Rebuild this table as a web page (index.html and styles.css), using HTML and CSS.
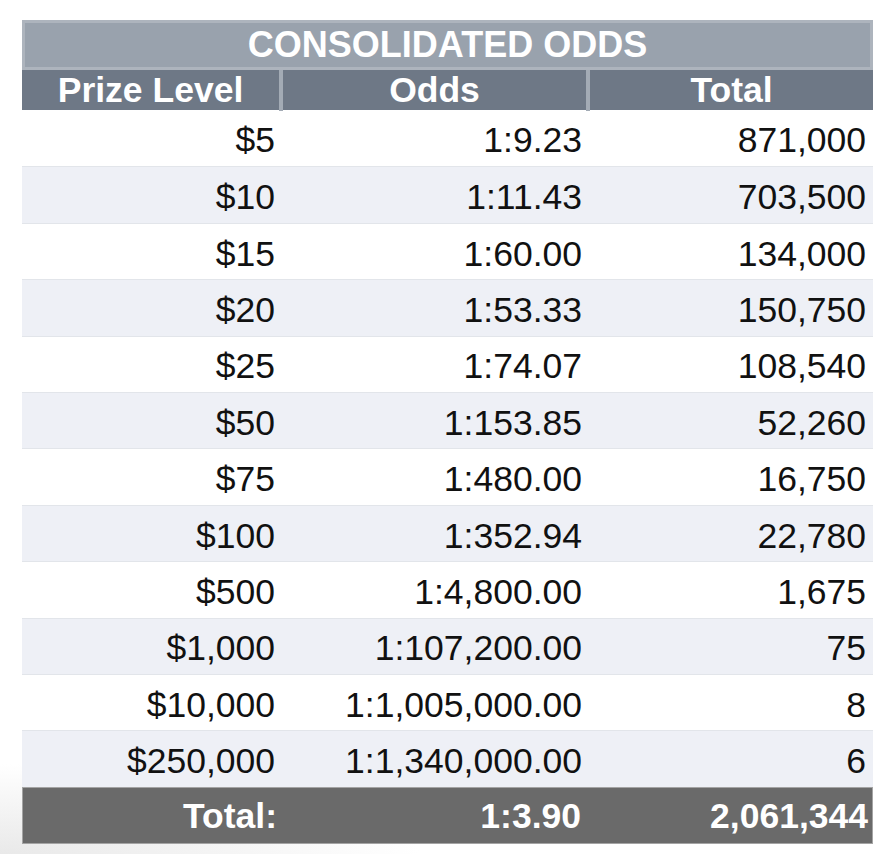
FILE: index.html
```html
<!DOCTYPE html>
<html lang="en">
<head>
<meta charset="utf-8">
<title>Consolidated Odds</title>
<link rel="stylesheet" href="styles.css">
</head>
<body>
<div class="odds">
  <div class="title">CONSOLIDATED ODDS</div>
  <div class="row head">
    <div class="cell">Prize Level</div>
    <div class="cell div">Odds</div>
    <div class="cell div">Total</div>
  </div>
  <div class="row data"><div class="cell">$5</div><div class="cell">1:9.23</div><div class="cell c3">871,000</div></div>
  <div class="row data alt"><div class="cell">$10</div><div class="cell">1:11.43</div><div class="cell c3">703,500</div></div>
  <div class="row data"><div class="cell">$15</div><div class="cell">1:60.00</div><div class="cell c3">134,000</div></div>
  <div class="row data alt"><div class="cell">$20</div><div class="cell">1:53.33</div><div class="cell c3">150,750</div></div>
  <div class="row data"><div class="cell">$25</div><div class="cell">1:74.07</div><div class="cell c3">108,540</div></div>
  <div class="row data alt"><div class="cell">$50</div><div class="cell">1:153.85</div><div class="cell c3">52,260</div></div>
  <div class="row data"><div class="cell">$75</div><div class="cell">1:480.00</div><div class="cell c3">16,750</div></div>
  <div class="row data alt"><div class="cell">$100</div><div class="cell">1:352.94</div><div class="cell c3">22,780</div></div>
  <div class="row data"><div class="cell">$500</div><div class="cell">1:4,800.00</div><div class="cell c3">1,675</div></div>
  <div class="row data alt"><div class="cell">$1,000</div><div class="cell">1:107,200.00</div><div class="cell c3">75</div></div>
  <div class="row data"><div class="cell">$10,000</div><div class="cell">1:1,005,000.00</div><div class="cell c3">8</div></div>
  <div class="row data alt"><div class="cell">$250,000</div><div class="cell">1:1,340,000.00</div><div class="cell c3">6</div></div>
  <div class="row total"><div class="cell">Total:</div><div class="cell">1:3.90</div><div class="cell c3">2,061,344</div></div>
</div>
</body>
</html>
```

FILE: styles.css
```css
html, body {
  margin: 0;
  padding: 0;
}
html {
  height: 100%;
  background: #ffffff;
}
body {
  min-height: 100%;
  background: radial-gradient(ellipse 420px 90px at 0 100%, #e9e9e9 0%, rgba(255, 255, 255, 0) 100%);
  font-family: "Liberation Sans", Arial, sans-serif;
  font-size: 35.5px;
  color: #111111;
}
.odds {
  margin: 0 0 0 22px;
  padding-top: 20px;
  width: 851px;
}
.title {
  box-sizing: border-box;
  height: 50px;
  background: #99a2ad;
  border: 3px solid #adb4bd;
  color: #ffffff;
  font-weight: bold;
  font-size: 36px;
  text-align: center;
  line-height: 44px;
}
.row {
  display: grid;
  grid-template-columns: 257px 307px 287px;
}
.cell {
  box-sizing: border-box;
  display: flex;
  align-items: center;
  justify-content: flex-end;
  padding-right: 4px;
  white-space: nowrap;
}
.cell.c3 {
  padding-right: 7px;
}
.head {
  height: 40px;
  background: #6e7886;
  color: #ffffff;
  font-weight: bold;
}
.head .cell {
  justify-content: center;
  padding: 0;
}
.head .cell.div {
  border-left: 4px solid #a3abb5;
}
.data {
  box-sizing: border-box;
  height: 56.42px;
  background: #ffffff;
  border-top: 1px solid #e2e5ea;
}
.head + .data {
  border-top: none;
}
.data .cell {
  padding-top: 5px;
}
.data.alt {
  background: #eef0f6;
}
.total {
  box-sizing: border-box;
  height: 57px;
  background: #6a6a6a;
  border: 1px solid #a4a4a4;
  color: #ffffff;
  font-weight: bold;
}
.total .cell {
  padding-top: 2px;
}
.total .cell:first-child {
  padding-right: 3px;
}
.total .cell:nth-child(2) {
  padding-right: 6px;
}
.total .cell.c3 {
  padding-right: 6px;
}
```
